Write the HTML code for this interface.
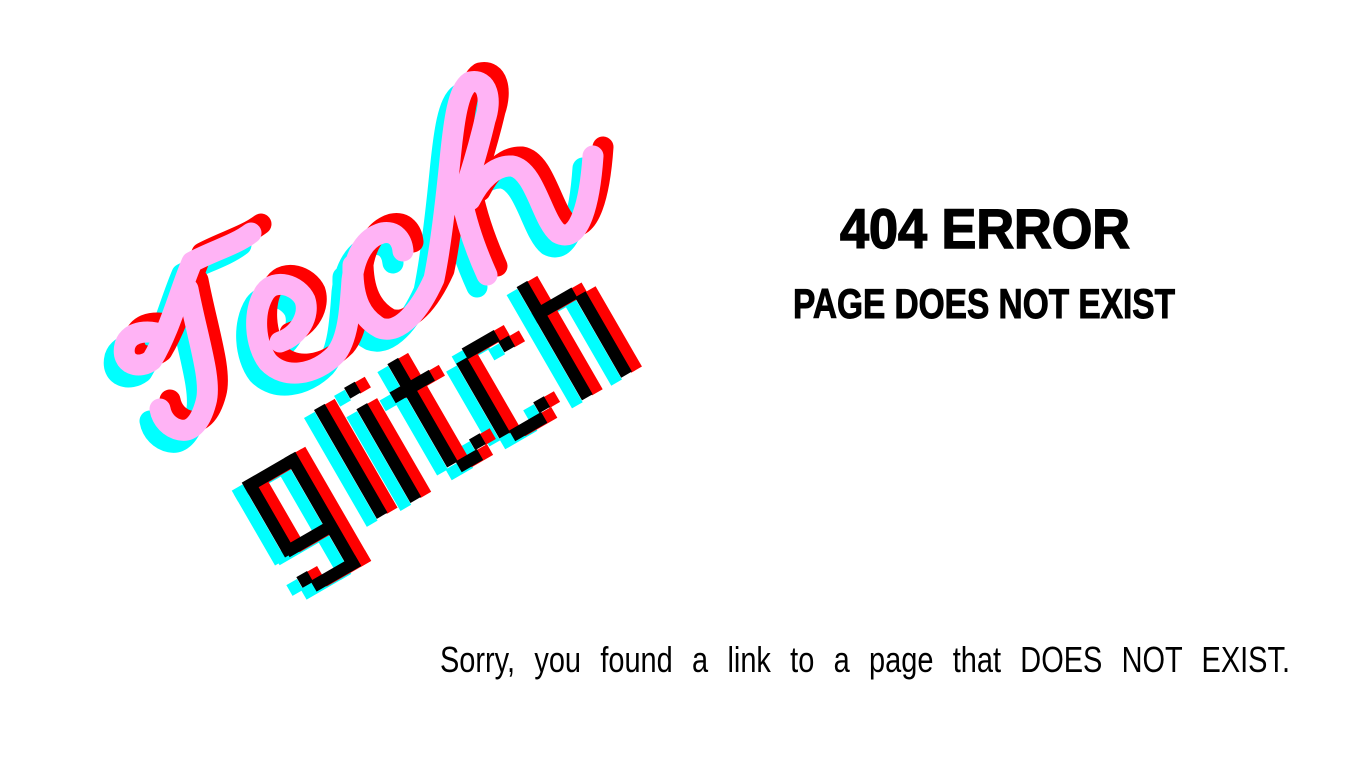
<!DOCTYPE html>
<html><head><meta charset="utf-8"><style>
html,body{margin:0;padding:0;background:#fff;width:1366px;height:768px;overflow:hidden}
</style></head><body>
<svg width="1366" height="768" viewBox="0 0 1366 768" xmlns="http://www.w3.org/2000/svg">
<defs>
<g id="tech" fill="none" stroke-width="21" stroke-linecap="round" stroke-linejoin="round">
  <path d="M163,335 C150,330 130,330 125,345 C120,365 140,370 152,360 C170,330 180,290 192,262 C215,250 235,245 251,233"/>
  <path d="M188,289 C198,340 212,380 206,402 C200,425 190,432 180,430 C170,428 162,420 160,409"/>
  <path d="M280,342 C300,335 310,315 305,300 C298,285 275,278 265,292 C252,312 255,345 268,362 C285,380 315,375 335,355 C348,340 350,310 352,280 C355,255 365,238 382,233 C395,230 402,240 403,251"/>
  <path d="M353,265 C352,300 362,318 380,328 C400,335 420,310 434,279 C440,250 446,200 450,160 C454,120 458,90 470,82 C488,78 492,100 485,120 C478,150 470,175 462,200 C468,230 478,255 487,275"/>
  <path d="M470,200 C480,180 495,165 512,166 C535,170 542,220 558,233 C580,245 590,200 593,156"/>
</g>
<g id="gl">
  <rect x="-9.6" y="2.6" width="5.6" height="1.2"/><rect x="-9.6" y="3" width="1.2" height="8"/><rect x="-9.2" y="10" width="5" height="1.2"/>
  <rect x="-4.8" y="2.6" width="1.2" height="12.8"/><rect x="-8.6" y="14.2" width="5" height="1.2"/><rect x="-9.6" y="13.2" width="1.2" height="1.2"/>
  <rect x="0" y="0" width="1.2" height="12.2"/>
  <rect x="3.6" y="-0.4" width="1.2" height="1.2"/><rect x="3.6" y="2" width="1.2" height="10.5"/>
  <rect x="8.4" y="-0.3" width="1.2" height="11.6"/><rect x="7.2" y="2.2" width="4.4" height="1.2"/><rect x="9.4" y="11.2" width="2.4" height="1.2"/><rect x="11.6" y="10" width="1.2" height="1.2"/>
  <rect x="15.4" y="2" width="3.6" height="1.2"/><rect x="18.8" y="3.2" width="1.2" height="1.2"/><rect x="14.2" y="3" width="1.2" height="8.4"/><rect x="15.4" y="11.2" width="3.6" height="1.2"/><rect x="18.8" y="10" width="1.2" height="1.2"/>
  <rect x="23" y="-0.5" width="1.2" height="12.7"/><rect x="24" y="2.2" width="3.6" height="1.2"/><rect x="27.4" y="3.2" width="1.2" height="9"/>
</g>
</defs>
<use href="#tech" stroke="#00ffff" transform="translate(-10,12)"/>
<use href="#tech" stroke="#ff0000" transform="translate(10,-9)"/>
<use href="#tech" stroke="#ffb3f5"/>
<g transform="translate(-10,8) translate(314,410) rotate(-30) scale(10.3)" fill="#00ffff"><use href="#gl"/></g>
<g transform="translate(10,-5) translate(314,410) rotate(-30) scale(10.3)" fill="#ff0000"><use href="#gl"/></g>
<g transform="translate(314,410) rotate(-30) scale(10.3)" fill="#000"><use href="#gl"/></g>
<text x="840" y="248" textLength="290" lengthAdjust="spacingAndGlyphs" font-family="Liberation Sans, sans-serif" font-weight="bold" font-size="56" stroke="#000" stroke-width="1.5">404 ERROR</text>
<text x="793" y="318" textLength="382" lengthAdjust="spacingAndGlyphs" font-family="Liberation Sans, sans-serif" font-weight="bold" font-size="42" stroke="#000" stroke-width="1">PAGE DOES NOT EXIST</text>
<text x="440" y="672" textLength="850" lengthAdjust="spacingAndGlyphs" font-family="Liberation Sans Narrow, Liberation Sans, sans-serif" font-size="36" word-spacing="14">Sorry, you found a link to a page that DOES NOT EXIST.</text>
</svg>
</body></html>
